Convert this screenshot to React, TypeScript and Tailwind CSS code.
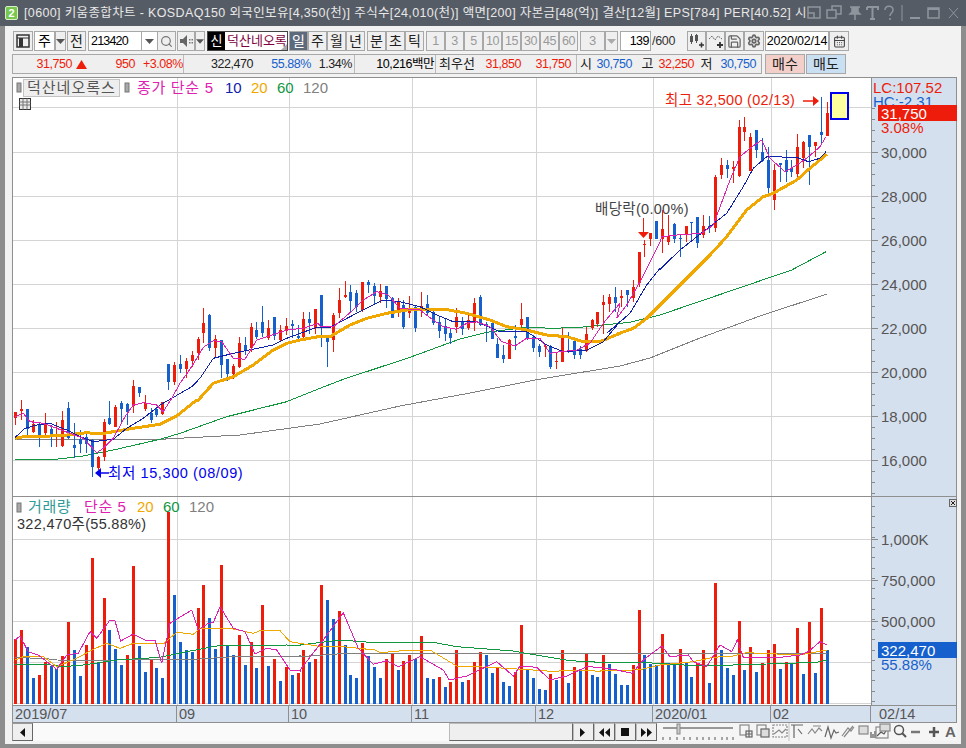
import React from "react";
import { Search, Settings, Save, CalendarDays } from "lucide-react";

const FX = (i: number) => Math.round(15.3 + 5.88 * i);

// type, bodyTop, bodyBottom, wickTop, wickBottom
const C = `r412 418 412 425,r409 411 400 420,b409 429 409 437,r424 432 420 433,b424 436 422 447,r423 433 413 435,b429 436 425 447,r434 437 422 447,r420 446 411 447,b408 438 402 439,b445 448 423 458,b439 444 430 453,b437 444 433 453,b440 467 439 477,r457 468 456 470,r422 457 419 461,b418 424 401 425,r407 427 405 427,b403 409 401 422,b404 412 403 425,r386 406 380 413,b387 393 387 397,r403 409 395 411,b413 420 408 423,b409 415 407 417,r402 414 402 415,b364 382 364 390,r365 382 362 385,b364 369 355 373,r361 369 358 378,r355 361 351 367,r339 353 337 360,r323 333 308 343,b315 348 314 351,r339 348 335 357,b340 365 340 378,b359 374 359 381,r366 374 364 379,r343 367 337 368,b345 350 337 355,r327 348 323 352,b330 337 322 339,b322 333 306 337,r328 338 320 340,b317 336 317 340,r330 340 325 341,r326 331 318 335,b324 326 320 338,b336 338 325 340,r319 337 312 338,b319 323 312 334,r309 328 309 334,b295 327 295 347,b338 342 337 367,r315 340 313 352,r300 313 288 318,r295 297 281 298,b292 301 285 312,b293 307 290 312,r282 310 282 312,b282 285 280 293,b286 296 283 305,r291 297 284 303,b286 299 286 308,b298 318 297 318,r302 310 298 317,b305 327 300 329,r310 313 296 318,b307 328 305 332,r306 307 292 317,b304 313 295 315,b312 323 308 325,b322 331 317 338,b326 334 318 341,b333 338 328 344,r317 327 308 333,b321 329 317 335,r320 328 313 330,r303 323 298 331,b297 325 295 326,b324 326 322 342,b323 339 322 339,b344 358 338 358,b355 359 345 363,r340 359 339 359,b336 338 325 350,r319 325 303 327,b317 338 317 340,b337 348 335 352,b346 352 344 357,r346 347 345 357,b347 367 345 369,r361 362 353 369,r336 362 328 362,b336 337 332 353,b341 355 341 359,b349 355 346 359,r334 351 327 352,r320 328 319 330,r312 324 312 327,r302 305 295 334,r297 304 294 312,b297 303 287 312,r296 298 290 307,b290 295 290 307,r287 298 280 302,r252 283 252 287,r244 245 240 257,r233 239 233 246,b221 239 221 239,r229 239 210 253,r236 242 215 245,b224 239 223 243,b238 239 235 257,r226 234 226 242,b222 223 222 240,b217 243 217 248,r226 235 215 238,b226 228 216 233,r177 228 175 232,r165 175 158 179,b165 169 160 178,r167 169 161 183,r127 176 120 177,r127 132 117 141,r137 171 133 171,b130 150 130 158,b152 161 138 162,b160 188 147 195,r170 200 164 210,b163 165 163 182,b160 172 150 182,b168 172 160 177,r147 174 134 177,r142 158 141 168,b135 147 135 185,r142 146 142 157,b132 135 97 145,r113 136 102 136`
  .split(",")
  .map((s) => {
    const [a, b, c, d] = s.slice(1).split(" ").map(Number);
    return { up: s[0] === "r", a, b, c, d };
  });

const seg = (ox: number, oy: number, p: number[]) => {
  const out: [number, number][] = [];
  for (let i = 0; i < p.length; i += 2) out.push([ox + p[i] / 3, oy + p[i + 1] / 3]);
  return out;
};
const pl = (...parts: [number, number][][]) =>
  parts
    .flat()
    .map(([x, y]) => `${x.toFixed(1)},${y.toFixed(1)}`)
    .join(" ");

const ma5 = pl(
  seg(0, 380, [46, 110, 70, 100, 90, 125, 130, 130, 170, 145, 210, 160, 250, 175, 290, 218, 310, 205, 340, 175, 375, 110, 400, 75, 430, 68, 470, 75, 490, 95]),
  seg(0, 270, [515, 385, 540, 340, 575, 290, 610, 232, 640, 212, 665, 215, 700, 265, 735, 268, 770, 210, 800, 200, 860, 180, 910, 175, 955, 160]),
  seg(320, 270, [0, 168, 40, 170, 100, 120, 130, 90, 170, 65, 205, 75, 240, 115, 300, 120, 340, 150, 370, 170, 410, 178, 440, 160, 470, 155, 510, 170, 545, 215, 585, 228, 620, 205, 660, 205, 690, 250, 720, 245, 770, 240, 810, 220, 850, 160, 900, 100]),
  seg(590, 225, [80, 280, 110, 240, 150, 170, 185, 100, 210, 50]),
  seg(620, 100, [125, 410, 170, 405, 245, 400, 280, 375, 330, 240, 360, 170, 390, 145, 425, 120, 450, 175, 495, 215, 530, 195, 560, 175, 600, 140, 618, 110])
);
const ma10 = pl(
  seg(0, 380, [46, 172, 75, 145, 110, 135, 150, 130, 200, 150, 240, 170, 280, 185, 340, 178, 380, 145, 430, 115, 480, 75]),
  seg(0, 270, [515, 385, 575, 350, 600, 325, 640, 265, 700, 250, 820, 225, 860, 205, 950, 172]),
  seg(320, 270, [0, 172, 30, 172, 100, 135, 190, 90, 240, 95, 300, 110, 350, 135, 400, 155, 470, 155, 540, 185, 620, 185, 680, 225, 730, 245, 800, 240, 850, 215, 900, 155]),
  seg(590, 225, [50, 325, 120, 265, 170, 180, 210, 130]),
  seg(620, 100, [118, 510, 180, 450, 250, 395, 320, 340, 370, 260, 400, 205, 440, 170, 530, 172, 565, 185, 600, 175, 618, 155])
);
const ma20 = pl(
  seg(0, 380, [46, 175, 80, 168, 150, 168, 200, 165, 260, 158, 300, 162, 340, 155, 400, 145, 480, 133, 530, 108, 590, 60]),
  seg(0, 270, [595, 390, 640, 340, 700, 320, 760, 285, 820, 240, 860, 220, 900, 210, 955, 200]),
  seg(320, 270, [0, 200, 30, 200, 90, 165, 140, 145, 200, 130, 260, 120, 370, 117, 440, 130, 510, 150, 560, 170, 620, 180, 680, 195, 740, 200, 790, 215, 840, 215, 900, 190]),
  seg(590, 225, [80, 328, 130, 310, 170, 280, 210, 240]),
  seg(620, 100, [225, 510, 270, 465, 320, 410, 380, 330, 430, 290, 460, 280, 530, 240, 570, 205, 620, 163])
);
const ma60 = pl(
  seg(0, 380, [46, 240, 175, 237, 250, 228, 340, 210, 480, 178, 540, 160, 680, 110, 860, 65, 960, 25]),
  seg(320, 270, [70, 328, 270, 262, 420, 207, 500, 187, 620, 172, 700, 175, 780, 172, 900, 160]),
  seg(590, 225, [40, 300, 120, 292, 210, 270]),
  seg(620, 100, [515, 510, 618, 455])
);
const ma120 = pl(
  seg(0, 380, [46, 178, 270, 178, 480, 178, 720, 165, 960, 132]),
  [[400, 406], [470, 393], [535, 380], [620, 366], [650, 358], [700, 338], [760, 316], [827, 294]]
);

const V = `R237,R210,B261,B354,R345,R306,B318,B328,R288,R186,B270,B348,R255,R-6,B310,R114,B210,B267,B315,R285,R18,B258,B336,R297,B324,B354,R-144,B105,B246,B270,B275,R144,R75,B174,B267,R15,B258,B285,R225,B315,R246,B324,R135,B318,R297,B363,R321,B345,R339`;
const V2 = `R180,B216,R207,R-15,B30,B87,R63,B165,B255,B264,R159,B198,B231,B264,R207,R189,B240,R213,R195,B207,R138,B264,B267,R261,B291,R276,R180,B276,R270,R216,R186,B195,B249,R231,B276,B288,R246,R105,B240,B264,B297,B300,R252,B270,R180,B279,R231,B243,R192,B255,B261`;
const V3 = `R255,B282,B312,B345,B345,R285,R120,B255,B282,B285,R192,B279,B279,R237,B279,B321,R279,R240,B339,R39,B240,B294,B315,R153,B300,R231,B306,R279,R240,R222,B297,R276,B279,R174,B312,R156,B309,R114,B240`;
const vols = [
  ...V.split(",").map((s) => ({ up: s[0] === "R", y: 560 + Number(s.slice(1)) / 3 })),
  ...V2.split(",").map((s) => ({ up: s[0] === "R", y: 590 + Number(s.slice(1)) / 3 })),
  ...V3.split(",").map((s) => ({ up: s[0] === "R", y: 570 + Number(s.slice(1)) / 3 })),
];

const v5 = pl(
  seg(0, 560, [46, 240, 60, 228, 85, 275, 115, 285, 170, 328, 200, 285, 235, 280, 270, 215, 290, 235, 330, 180, 345, 183, 362, 243, 400, 222, 440, 243, 465, 240, 485, 310, 510, 190, 575, 150, 595, 210, 625, 190, 640, 188, 660, 140, 700, 205, 735, 215, 765, 282, 800, 265, 830, 270, 870, 330, 900, 333]),
  seg(300, 590, [0, 240, 70, 150, 130, 68, 175, 175, 220, 223, 260, 212, 295, 230, 360, 200, 430, 240, 448, 270, 500, 258, 590, 215, 640, 258, 660, 228, 710, 232, 750, 270, 800, 258, 860, 230, 900, 232]),
  seg(600, 570, [0, 292, 50, 300, 97, 310, 130, 270, 185, 228, 210, 260, 265, 255, 280, 275, 320, 290, 360, 225, 395, 245, 412, 210, 430, 262, 500, 262, 540, 262, 600, 255, 625, 245, 660, 215, 680, 225])
);
const v20 = pl(
  seg(0, 560, [46, 300, 70, 290, 130, 290, 170, 320, 230, 295, 280, 268, 320, 250, 360, 265, 400, 250, 490, 252, 530, 217, 580, 223, 600, 205, 700, 207, 760, 220, 780, 212, 840, 212, 870, 245, 900, 250]),
  seg(300, 590, [0, 160, 50, 168, 130, 170, 225, 180, 240, 188, 330, 180, 390, 180, 470, 228, 570, 232, 700, 240, 770, 245, 790, 240, 860, 240, 900, 245]),
  seg(600, 570, [0, 302, 60, 303, 130, 297, 180, 285, 280, 275, 340, 262, 400, 258, 440, 248, 600, 255, 680, 240])
);
const v60 = pl(
  seg(0, 560, [46, 315, 130, 312, 190, 320, 250, 315, 350, 300, 480, 292, 560, 275, 650, 258, 860, 255, 900, 257]),
  seg(300, 590, [0, 165, 120, 150, 210, 157, 400, 157, 470, 170, 640, 183, 690, 192, 810, 212, 900, 217]),
  seg(600, 570, [0, 278, 140, 278, 300, 288, 500, 282, 650, 277, 680, 270])
);
const v120 = pl(
  seg(0, 560, [46, 293, 130, 295, 190, 302, 350, 300, 600, 297, 700, 290, 900, 288]),
  seg(300, 590, [0, 200, 140, 190, 900, 190]),
  seg(600, 570, [0, 250, 140, 250, 680, 252])
);

const VLines = [177.5, 289.5, 412.5, 536.5, 653.5, 771.5];
const RED = "#ee1c0a";
const BLUE = "#1560cc";

function PriceChart() {
  return (
    <svg viewBox="13 78 858 418" className="block w-[858px] h-[418px]" fontSize="14">
      {[107, 152, 196, 240, 284, 328, 372, 416, 460].map((y) => (
        <line key={y} x1="13" x2="871" y1={y + 0.5} y2={y + 0.5} stroke="#d4d4d4" />
      ))}
      {VLines.map((x) => (
        <line key={x} x1={x} x2={x} y1="78" y2="496" stroke="#d4d4d4" />
      ))}
      <g shapeRendering="crispEdges" fill="none">
        <polyline points={ma120} stroke="#808080" strokeWidth="1" />
        <polyline points={ma60} stroke="#10973f" strokeWidth="1" />
      </g>
      <g shapeRendering="crispEdges">
        {C.map((c, i) => {
          const x = FX(i);
          const col = c.up ? RED : BLUE;
          return (
            <g key={i}>
              <rect x={x} y={c.c} width="1" height={c.d - c.c} fill={col} />
              <rect x={x - 1} y={c.a} width="3" height={Math.max(c.b - c.a, 1)} fill={col} />
            </g>
          );
        })}
      </g>
      <g shapeRendering="crispEdges" fill="none">
        <polyline points={ma20} stroke="#f0a800" strokeWidth="3" />
        <polyline points={ma10} stroke="#1020a8" strokeWidth="1" />
        <polyline points={ma5} stroke="#e020b0" strokeWidth="1" />
      </g>

      {/* legend */}
      <rect x="17" y="83" width="4" height="9" fill="#a8a8a8" stroke="#777" />
      <rect x="23.5" y="79.5" width="96" height="17" fill="#eeeeee" stroke="#c4c4c4" />
      <text x="27" y="93" fontSize="15" fill="#555" letterSpacing="1">덕산네오록스</text>
      <rect x="125" y="83" width="4" height="9" fill="#a8a8a8" stroke="#777" />
      <text x="137" y="93" fill="#e020b0" fontSize="15" letterSpacing="0.7">종가 단순 5</text>
      <text x="225" y="93" fill="#1020a8" fontSize="15">10</text>
      <text x="251" y="93" fill="#f0a800" fontSize="15">20</text>
      <text x="277" y="93" fill="#10973f" fontSize="15">60</text>
      <text x="303" y="93" fill="#808080" fontSize="15">120</text>
      <g fill="none" stroke="#333">
        <rect x="19.5" y="98.5" width="11" height="11" fill="#e8e8e8" />
        <path d="M19.5 102h11M19.5 105h11M23 98.5v11M27 98.5v11" stroke="#777" />
      </g>

      {/* annotations */}
      <text x="665" y="105" fill={RED} fontSize="14.5" letterSpacing="0.3">최고 32,500 (02/13)</text>
      <path d="M803 101h11" stroke={RED} strokeWidth="1.5" />
      <path d="M813 96l6 5-6 5z" fill={RED} />
      <text x="108" y="478" fill="#0000ee" fontSize="14.5" letterSpacing="0.6">최저 15,300 (08/09)</text>
      <path d="M98 473h11" stroke="#0000ee" strokeWidth="1.5" />
      <path d="M95 473l6-5v10z" fill="#0000ee" />
      <text x="595" y="214" fill="#444" fontSize="14.5" letterSpacing="0.3">배당락(0.00%)</text>
      <path d="M643.5 218v15" stroke={RED} />
      <path d="M638 232h11l-5.500 6z" fill={RED} />
      <rect x="831" y="93" width="17" height="26" fill="#ffff9e" stroke="#0000ee" strokeWidth="2" />
    </svg>
  );
}

function VolumeChart() {
  return (
    <svg viewBox="13 497 858 208" className="block w-[858px] h-[208px]" fontSize="14">
      {[539, 580, 621, 662, 703].map((y) => (
        <line key={y} x1="13" x2="871" y1={y + 0.5} y2={y + 0.5} stroke="#d4d4d4" />
      ))}
      {VLines.map((x) => (
        <line key={x} x1={x} x2={x} y1="497" y2="705" stroke="#d4d4d4" />
      ))}
      <g shapeRendering="crispEdges">
        {vols.map((v, i) => (
          <rect key={i} x={FX(i) - 1} y={v.y} width="3" height={704 - v.y} fill={v.up ? RED : BLUE} />
        ))}
      </g>
      <g shapeRendering="crispEdges" fill="none" strokeWidth="1">
        <polyline points={v120} stroke="#808080" />
        <polyline points={v60} stroke="#10973f" />
        <polyline points={v20} stroke="#f0a800" />
        <polyline points={v5} stroke="#e020b0" />
      </g>

      <rect x="17" y="503" width="4" height="9" fill="#a8a8a8" stroke="#777" />
      <text x="28" y="512" fill="#2f9a96" fontSize="15" letterSpacing="0.6">거래량</text>
      <text x="84" y="512" fill="#e020b0" fontSize="15" letterSpacing="0.6">단순 5</text>
      <text x="137" y="512" fill="#f0a800" fontSize="15">20</text>
      <text x="163" y="512" fill="#10973f" fontSize="15">60</text>
      <text x="189" y="512" fill="#808080" fontSize="15">120</text>
      <text x="17" y="529" fill="#333" fontSize="14.5" letterSpacing="0.3">322,470주(55.88%)</text>
    </svg>
  );
}

function Axis() {
  const ticks: number[] = [];
  for (let y = 108; y < 494; y += 11) ticks.push(y);
  for (let y = 506; y < 704; y += 10.25) ticks.push(y);
  const labels: [string, number][] = [
    ["30,000", 152], ["28,000", 196], ["26,000", 240], ["24,000", 284],
    ["22,000", 328], ["20,000", 372], ["18,000", 416], ["16,000", 460],
    ["1,000K", 539], ["750,000", 580], ["500,000", 621],
  ];
  return (
    <svg viewBox="871 78 85 627" className="block w-[85px] h-[627px]" fontSize="15">
      {ticks.map((y, i) => (
        <line key={i} x1="871" x2="874" y1={Math.round(y) + 0.5} y2={Math.round(y) + 0.5} stroke="#8a8a8a" />
      ))}
      {labels.map(([t, y]) => (
        <g key={t}>
          <line x1="871" x2="877" y1={y + 0.5} y2={y + 0.5} stroke="#8a8a8a" />
          <text x="880" y={y + 5.500} fill="#555">{t}</text>
        </g>
      ))}
      <text x="872" y="93" fill={RED}>LC:107.52</text>
      <text x="872" y="107" fill={BLUE}>HC:-2.31</text>
      <rect x="877" y="105" width="79" height="16" fill={RED} />
      <text x="880" y="119" fill="#fff">31,750</text>
      <text x="880" y="133" fill={RED}>3.08%</text>
      <rect x="877" y="642" width="79" height="16" fill={BLUE} />
      <text x="880" y="656" fill="#fff">322,470</text>
      <text x="880" y="670" fill={BLUE}>55.88%</text>
      <line x1="871" x2="956" y1="496.500" y2="496.500" stroke="#8f8f8f" />
      <rect x="948.500" y="499.500" width="7" height="7" fill="#ddd" stroke="#666" />
      <path d="M950 501l4 4M954 501l-4 4" stroke="#222" />
    </svg>
  );
}

const Btn = ({ w, children, on, off }: { w: string; children?: React.ReactNode; on?: boolean; off?: boolean }) => (
  <div
    className={`${w} h-full flex items-center justify-center border border-[#a8a8a8] text-[14px] ${
      on ? "bg-[#5c6a7c] text-white" : off ? "bg-[#efefef] text-[#999]" : "bg-[#efefef] text-[#222]"
    }`}
  >
    {children}
  </div>
);

const DropTri = ({ c = "#555" }: { c?: string }) => (
  <svg width="9" height="5" viewBox="0 0 9 5"><path d="M0 0h9L4.500 5z" fill={c} /></svg>
);

function TopToolbar() {
  return (
    <div className="flex items-center h-[20px] mt-[5px] ml-[1px] text-[14px]">
      <Btn w="w-[20px]">
        <svg width="14" height="14" viewBox="0 0 14 14">
          <rect x="1" y="1" width="12" height="12" fill="none" stroke="#333" strokeWidth="1.500" />
          <rect x="3" y="4" width="4" height="9" fill="#333" />
          <path d="M1 4h12" stroke="#333" />
        </svg>
      </Btn>
      <div className="w-[21px] ml-[1px] h-full flex items-center justify-center bg-white border border-[#a8a8a8]">주</div>
      <Btn w="w-[11px]"><DropTri /></Btn>
      <div className="w-[1px]" />
      <Btn w="w-[19px]">전</Btn>
      <div className="w-[2px]" />
      <div className="w-[54px] h-full flex items-center pl-[2px] bg-white border border-[#a8a8a8] text-[12.5px] tracking-[-0.8px]">213420</div>
      <div className="w-[15px] h-full flex items-center justify-center bg-white border-y border-[#a8a8a8]"><DropTri /></div>
      <Btn w="w-[19px]"><Search size={13} color="#777" strokeWidth={2.2} /></Btn>
      <div className="w-[1px]" />
      <Btn w="w-[18px]">
        <svg width="13" height="12" viewBox="0 0 13 12">
          <path d="M0 4h3l4-4v12L3 8H0z" fill="#666" />
          <path d="M9 4h1.500v1.500H9zM9 7h1.500v1.500H9zM11.500 4H13v1.500h-1.500zM11.500 7H13v1.500h-1.500z" fill="#777" />
        </svg>
      </Btn>
      <Btn w="w-[10px]"><DropTri /></Btn>
      <div className="w-[2px]" />
      <div className="w-[81px] h-full flex items-center bg-white border border-[#444] relative">
        <span className="w-[17px] h-full bg-black text-white flex items-center justify-center text-[13px]">신</span>
        <span className="ml-[2px] text-[#800040] text-[13px] whitespace-nowrap">덕산네오록</span>
        <span className="absolute right-0 bottom-0 w-0 h-0 border-l-[6px] border-l-transparent border-b-[6px] border-b-[#aaa]" />
      </div>
      <div className="w-[1px]" />
      <Btn w="w-[19px]" on>일</Btn>
      <Btn w="w-[19px]">주</Btn>
      <Btn w="w-[19px]">월</Btn>
      <Btn w="w-[19px]">년</Btn>
      <div className="w-[2px]" />
      <Btn w="w-[19px]">분</Btn>
      <Btn w="w-[19px]">초</Btn>
      <Btn w="w-[19px]">틱</Btn>
      <div className="w-[2px]" />
      {["1", "3", "5", "10", "15", "30", "45", "60"].map((t) => (
        <Btn key={t} w="w-[19px]" off><span className="text-[12.5px] tracking-[-0.5px]">{t}</span></Btn>
      ))}
      <div className="w-[2px]" />
      <Btn w="w-[25px]" off><span className="text-[13px]">3</span></Btn>
      <Btn w="w-[13px]" off><DropTri c="#aaa" /></Btn>
      <div className="w-[2px]" />
      <div className="w-[31px] h-full flex items-center justify-end pr-[1px] bg-white border border-[#a8a8a8] text-[12.5px] tracking-[-0.5px]">139</div>
      <span className="w-[28px] ml-[1px] text-[12.5px] tracking-[-0.3px] text-[#333]">/600</span>
      <div className="w-[7px]" />
      <Btn w="w-[19px]">
        <svg width="15" height="14" viewBox="0 0 15 14">
          <path d="M1 2h3v6H1zM6 1h3v6H6z" fill="#555" /><path d="M2.500 0v10M7.500 0v9" stroke="#555" />
          <path d="M10 11h5M12.500 8.500v5" stroke="#333" strokeWidth="1.500" />
        </svg>
      </Btn>
      <Btn w="w-[19px]">
        <svg width="16" height="14" viewBox="0 0 16 14">
          <path d="M1 5l3-3 3 4 3-4 4 3" fill="none" stroke="#666" strokeDasharray="2 1" />
          <path d="M9 11h6M12 8v6" stroke="#333" strokeWidth="1.800" />
        </svg>
      </Btn>
      <Btn w="w-[19px]"><Save size={15} color="#666" strokeWidth={2} /></Btn>
      <Btn w="w-[20px]"><Settings size={14} color="#666" strokeWidth={3} /></Btn>
      <div className="w-[1px]" />
      <div className="w-[64px] h-full flex items-center justify-center bg-white border border-[#a8a8a8] text-[12.5px] tracking-[-0.2px] whitespace-nowrap">2020/02/14</div>
      <Btn w="w-[20px]"><CalendarDays size={13} color="#444" strokeWidth={2} /></Btn>
    </div>
  );
}

const Q = ({ w, c, right = true, children }: { w: string; c?: string; right?: boolean; children: React.ReactNode }) => (
  <span className={`${w} shrink-0 whitespace-nowrap ${right ? "text-right" : ""} ${c ?? "text-[#222]"}`}>{children}</span>
);

function QuoteRow() {
  return (
    <div className="flex h-[20px] mt-[3px] text-[12.5px] tracking-[-0.45px] items-stretch">
      <div className="w-[750px] flex bg-[#efefef] border border-[#a8a8a8] items-center leading-none">
        <div className="w-[171px] flex items-center h-full border-r border-[#bbb]">
          <Q w="w-[59px]" c="text-[#ee1c0a]">31,750</Q>
          <svg width="11" height="9" viewBox="0 0 11 9" className="ml-[4px]"><path d="M5.500 0L11 9H0z" fill="#ee1c0a" /></svg>
          <Q w="w-[48px]" c="text-[#ee1c0a]">950</Q>
          <Q w="w-[48px]" c="text-[#ee1c0a]">+3.08%</Q>
        </div>
        <div className="w-[171px] flex items-center h-full border-r border-[#bbb]">
          <Q w="w-[69px]">322,470</Q>
          <Q w="w-[58px]" c="text-[#1560cc]">55.88%</Q>
          <Q w="w-[41px]">1.34%</Q>
        </div>
        <div className="w-[81px] h-full flex items-center justify-end border-r border-[#bbb] pr-[1px] whitespace-nowrap">10,216백만</div>
        <div className="w-[141px] flex items-center h-full border-r border-[#bbb]">
          <Q w="w-[40px]" right={false}><span className="pl-[3px] text-[13px] tracking-normal">최우선</span></Q>
          <Q w="w-[45px]" c="text-[#ee1c0a]">31,850</Q>
          <Q w="w-[50px]" c="text-[#ee1c0a]">31,750</Q>
        </div>
        <div className="flex items-center h-full">
          <Q w="w-[15px]" right={false}><span className="pl-[3px] text-[13px]">시</span></Q>
          <Q w="w-[40px]" c="text-[#1560cc]">30,750</Q>
          <Q w="w-[21px]"><span className="text-[13px]">고</span></Q>
          <Q w="w-[41px]" c="text-[#ee1c0a]">32,250</Q>
          <Q w="w-[18px]"><span className="text-[13px]">저</span></Q>
          <Q w="w-[44px]" c="text-[#1560cc]">30,750</Q>
        </div>
      </div>
      <div className="w-[3px]" />
      <div className="w-[40px] flex items-center justify-center bg-[#f3cfc9] border border-[#a8a8a8] text-[14px] tracking-normal text-[#222]">매수</div>
      <div className="w-[1px]" />
      <div className="w-[40px] flex items-center justify-center bg-[#c9dff2] border border-[#a8a8a8] text-[14px] tracking-normal text-[#222]">매도</div>
    </div>
  );
}

const TitleIcons = () => (
  <svg width="154" height="18" viewBox="0 0 154 18" className="shrink-0" fill="none" stroke="#8f959d" strokeWidth="1.500">
    <rect x="1" y="3" width="12" height="11" />
    <path d="M1 9h6v5" />
    <rect x="25" y="2" width="9" height="8" />
    <rect x="20" y="6" width="9" height="8" fill="#565c66" />
    <path d="M43 3h10M45 3v5l-2 2h10l-2-2V3M48 10v6" fill="#8f959d" />
    <path d="M60 3h11v3M65.500 3v12M63 15h5M60 3v3" strokeWidth="2" />
    <path d="M78 6c0-5 8-5 8 0 0 3-3 3-3 6M83 14v2" />
    <path d="M95 1v16" strokeWidth="1" />
    <path d="M103 14h10" strokeWidth="2" />
    <rect x="121" y="4" width="11" height="10" />
    <path d="M121 5h11" strokeWidth="2" />
    <path d="M142 4l9 10M151 4l-9 10" strokeWidth="1" />
  </svg>
);

function BottomBar() {
  return (
    <div className="flex h-[18px] items-stretch bg-[#f5f5f5]">
      <div className="w-[21px] flex items-center justify-center bg-[#efefef] border border-[#999] border-r-[#666] border-b-[#666]">
        <svg width="5" height="9" viewBox="0 0 5 9"><path d="M5 0v9L0 4.500z" fill="#111" /></svg>
      </div>
      <div className="w-[416px] bg-[#fafafa]" />
      <div className="w-[124px] bg-[#efefef] border border-[#bbb] border-r-[#666] border-b-[#666]" />
      <div className="flex">
        {[
          "M3 0v9l5-4.500z",
          "M6 0v9L1 4.500zM12 0v9L7 4.500z",
          "M2 0h8v8H2z",
          "M1 0v9l5-4.500zM7 0v9l5-4.500z",
        ].map((d) => (
          <div key={d} className="w-[21px] flex items-center justify-center bg-[#efefef] border border-[#bbb] border-r-[#666] border-b-[#666]">
            <svg width="13" height="9" viewBox="0 0 13 9"><path d={d} fill="#111" /></svg>
          </div>
        ))}
      </div>
      <svg width="79" height="18" viewBox="0 0 79 18" className="shrink-0" stroke="#555">
        <path d="M6 5h70" stroke="#999" strokeWidth="2" />
        <rect x="20" y="1" width="3" height="10" fill="#ccc" stroke="#888" />
        {[6, 13, 20, 27, 33, 40, 46, 52, 58, 65, 70, 76].map((x) => (
          <path key={x} d={`M${x} 14v3`} />
        ))}
      </svg>
      <svg width="220" height="18" viewBox="0 0 220 18" className="shrink-0" fill="none" stroke="#888" strokeWidth="1.200">
        <g transform="translate(3 0)">
          <rect x="1" y="2" width="9" height="10" /><rect x="7" y="8" width="6" height="6" fill="#eee" stroke="#666" /><path d="M7 11h6M10 8v6" stroke="#666" />
          <rect x="18" y="2" width="9" height="10" /><rect x="22" y="6" width="8" height="8" fill="#ddd" stroke="#666" />
          <rect x="34" y="2" width="14" height="12" strokeDasharray="2 1" /><path d="M35 11l5-4 3 3 4-4" />
        </g>
        <path d="M53 0v18" stroke="#ccc" />
        <path d="M55 2h12M58 2v13M62 6l4 5" stroke="#666" />
        <path d="M72 11l4-5 3 4 4-5 3 3M77 3h8" />
        <path d="M89 14l3-10 3 11 3-8 2 3 3-1" stroke="#666" />
        <path d="M106 13l6-8 3 3 3-4M108 14l9-11" />
        <rect x="123" y="3" width="9" height="8" fill="#ddd" /><path d="M135 9v6M137 11v4M139 8v7" stroke="#555" />
        <rect x="140" y="4" width="12" height="11" /><path d="M141 13l4-4 3 2 3-5" stroke="#555" /><rect x="144" y="1" width="10" height="7" fill="#ddd" />
        <circle cx="163" cy="7" r="4.500" stroke="#555" strokeWidth="1.500" /><path d="M166 10l4 4" stroke="#555" strokeWidth="2" />
        <path d="M175 9h9" stroke="#777" strokeWidth="2.500" />
        <path d="M193 9h10M198 4v10" stroke="#555" strokeWidth="2.500" />
        <text x="209" y="14" fill="#666" stroke="none" fontSize="15" fontWeight="bold">A</text>
      </svg>
    </div>
  );
}

export default function App() {
  return (
    <div className="w-[966px] h-[748px] flex flex-col overflow-hidden bg-[#f2f2f2] [font-family:'Liberation_Sans','Noto_Sans_CJK_KR',sans-serif]">
      <div className="h-[26px] shrink-0 flex items-center bg-[#565c66] pl-[5px] pr-[5px]">
        <div className="w-[13px] h-[14px] rounded-[2px] bg-[#78c850] border border-[#d8f0c8] text-white text-[11px] font-bold flex items-center justify-center leading-none">2</div>
        <div className="ml-[6px] w-[784px] text-[#e8e8e8] text-[12.500px] tracking-[0.36px] whitespace-nowrap overflow-hidden">
          [0600] 키움종합차트 - KOSDAQ150 외국인보유[4,350(천)] 주식수[24,010(천)] 액면[200] 자본금[48(억)] 결산[12월] EPS[784] PER[40.52] 시
        </div>
        <TitleIcons />
      </div>
      <div className="flex-1 flex flex-col border-x-[5px] border-b-[4px] border-[#8d8d8d] pl-[7px] pr-[4px] min-h-0">
        <TopToolbar />
        <QuoteRow />
        <div className="w-[945px] mt-[3px] border-x border-t border-[#8f8f8f] bg-[#d5e0ee]">
          <div className="flex">
            <div className="w-[858px] bg-white">
              <PriceChart />
              <div className="h-[1px] bg-[#8f8f8f]" />
              <VolumeChart />
            </div>
            <div className="w-[85px] border-l border-[#8f8f8f]">
              <Axis />
            </div>
          </div>
          <div className="flex h-[18px] border-y border-[#8f8f8f] text-[14.5px] text-[#555] leading-[17px]">
            {[
              ["w-[164px]", "2019/07"],
              ["w-[112px]", "09"],
              ["w-[123px]", "10"],
              ["w-[124px]", "11"],
              ["w-[117px]", "12"],
              ["w-[118px]", "2020/01"],
              ["w-[100px]", "02"],
            ].map(([w, t]) => (
              <div key={t} className={`${w} pl-[2px] border-r border-[#8f8f8f]`}>{t}</div>
            ))}
            <div className="flex-1 pl-[8px]">02/14</div>
          </div>
        </div>
        <BottomBar />
      </div>
    </div>
  );
}
